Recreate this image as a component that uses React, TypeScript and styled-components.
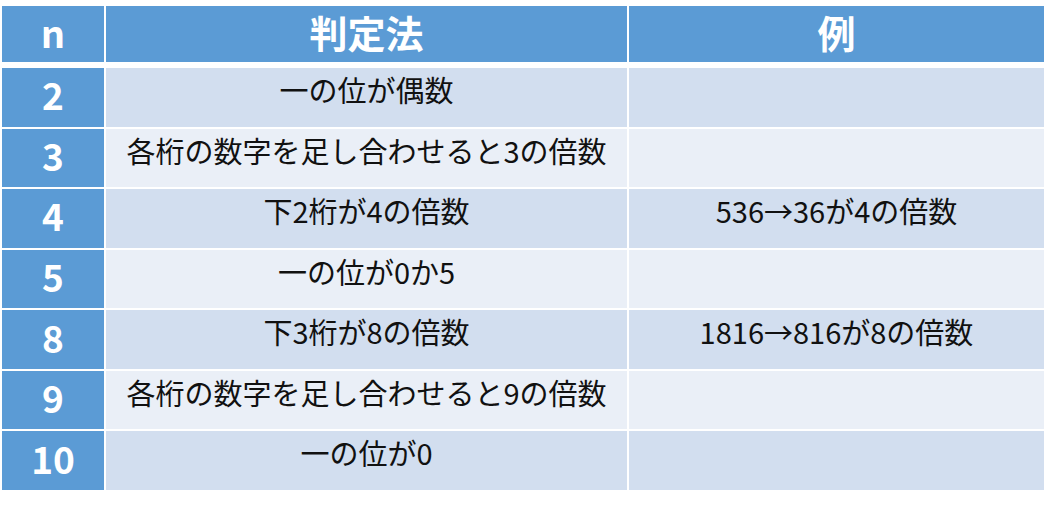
import { ReactElement } from 'react';
import styled, { createGlobalStyle } from 'styled-components';

type Row = {
    n: string;
    rule: string;
    example: string;
};

const ROWS: Row[] = [
    { n: '2', rule: '一の位が偶数', example: '' },
    { n: '3', rule: '各桁の数字を足し合わせると3の倍数', example: '' },
    { n: '4', rule: '下2桁が4の倍数', example: '536→36が4の倍数' },
    { n: '5', rule: '一の位が0か5', example: '' },
    { n: '8', rule: '下3桁が8の倍数', example: '1816→816が8の倍数' },
    { n: '9', rule: '各桁の数字を足し合わせると9の倍数', example: '' },
    { n: '10', rule: '一の位が0', example: '' },
];

const GlobalStyle = createGlobalStyle`
    html, body {
        margin: 0;
        padding: 0;
        background: #fff;
    }
    body {
        font-family: 'Noto Sans CJK JP', 'Noto Sans', sans-serif;
    }
`;

const App = (): ReactElement => (
    <>
        <GlobalStyle />
        <Wrapper>
            <HeaderRow>
                <HeaderCell>n</HeaderCell>
                <HeaderCell>判定法</HeaderCell>
                <HeaderCell>例</HeaderCell>
            </HeaderRow>
            <Body>
                {ROWS.map((row, i) => (
                    <BodyRow key={row.n}>
                        <NumCell>{row.n}</NumCell>
                        <Cell $band={i % 2 === 0}>{row.rule}</Cell>
                        <Cell $band={i % 2 === 0}>{row.example}</Cell>
                    </BodyRow>
                ))}
            </Body>
        </Wrapper>
    </>
);

const Wrapper = styled.div`
    display: flex;
    flex-direction: column;
    gap: 6px;
    width: 1042px;
    margin: 6px 0 0 2px;
`;

const columns = `
    display: grid;
    grid-template-columns: 102px 521px 415px;
    column-gap: 2px;
    min-height: 0;
`;

const HeaderRow = styled.div`
    ${columns}
    height: 56px;
`;

const HeaderCell = styled.div`
    display: flex;
    justify-content: center;
    align-items: center;
    background: #5b9bd5;
    color: #fff;
    font-size: 38px;
    font-weight: 700;
    line-height: 48px;
    padding-bottom: 4px;
`;

const Body = styled.div`
    display: grid;
    grid-template-rows: repeat(7, minmax(0, 1fr));
    row-gap: 2px;
    height: 422px;
`;

const BodyRow = styled.div`
    ${columns}
`;

const NumCell = styled.div`
    display: flex;
    justify-content: center;
    align-items: center;
    background: #5b9bd5;
    color: #fff;
    font-size: 37px;
    font-weight: 700;
    line-height: 46px;
    padding-bottom: 6px;
`;

const Cell = styled.div<{ $band: boolean }>`
    background: ${({ $band }) => ($band ? '#d2deef' : '#eaeff7')};
    color: #111;
    font-size: 29px;
    line-height: 42px;
    text-align: center;
    white-space: nowrap;
`;

export default App;
